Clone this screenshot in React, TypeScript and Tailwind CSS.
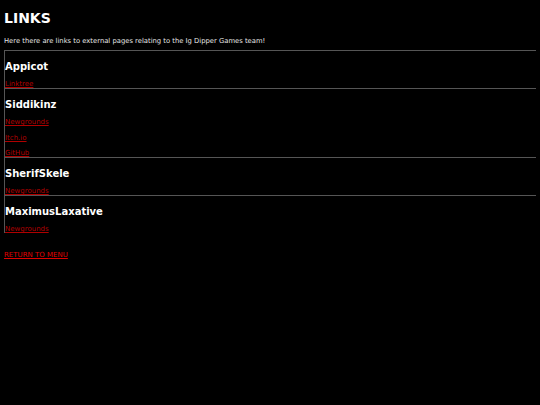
import React from "react";

type Member = { name: string; links: string[] };

const members: Member[] = [
  { name: "Appicot", links: ["Linktree"] },
  { name: "Siddikinz", links: ["Newgrounds", "Itch.io", "GitHub"] },
  { name: "SherifSkele", links: ["Newgrounds"] },
  { name: "MaximusLaxative", links: ["Newgrounds"] },
];

export default function App() {
  return (
    <div
      className="min-h-[405px] bg-black px-[4px] pt-[4px] pb-[8px] text-white"
      style={{ fontFamily: '"DejaVu Sans", Verdana, sans-serif' }}
    >
      <h1 className="mt-[6px] text-[14px] font-bold leading-[16px]">LINKS</h1>
      <p className="mt-[11px] text-[6.8px] leading-[8px] text-[#e6e6e6]">
        Here there are links to external pages relating to the Ig Dipper Games team!
      </p>
      <div className="mt-[5px]">
        {members.map((m) => (
          <section key={m.name} className="border-t border-l border-[#555555]">
            <h2 className="pt-[10px] text-[10px] font-bold leading-[12px]">{m.name}</h2>
            {m.links.map((l) => (
              <p key={l} className="mt-[7.5px] first-of-type:mt-[7px] text-[7px] leading-[8px]">
                <a href="#" className="text-[#b00000] underline">
                  {l}
                </a>
              </p>
            ))}
          </section>
        ))}
      </div>
      <p className="mt-[18px] text-[7px] leading-[8px]">
        <a href="#" className="text-[#e00000] underline">
          RETURN TO MENU
        </a>
      </p>
    </div>
  );
}
